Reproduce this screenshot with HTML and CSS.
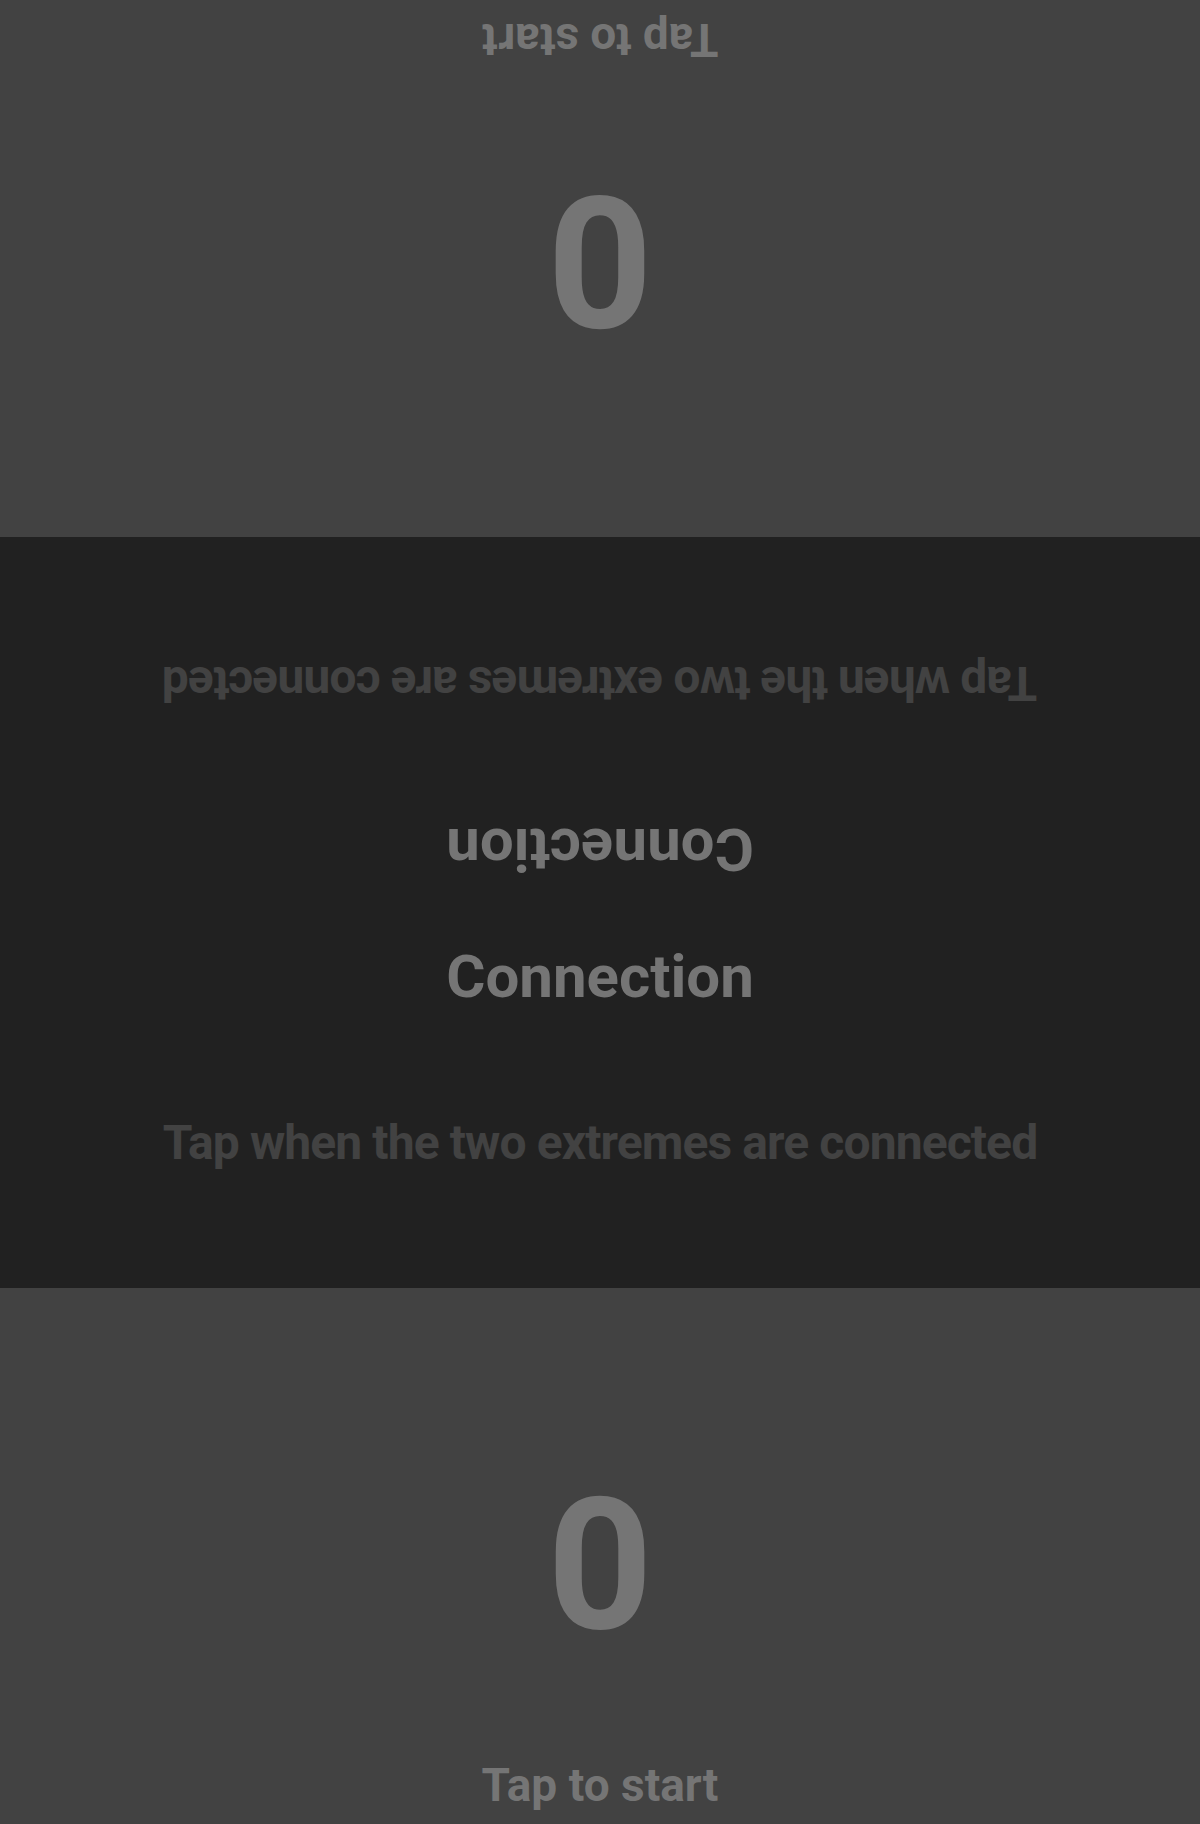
FILE: index.html
```html
<!DOCTYPE html>
<html lang="en">
<head>
<meta charset="utf-8">
<title>Connection</title>
<link rel="stylesheet" href="styles.css">
</head>
<body>
<div class="app">
  <section class="player player-top">
    <div class="score">0</div>
    <div class="start">Tap to start</div>
  </section>
  <section class="board">
    <div class="half half-flip">
      <div class="title">Connection</div>
      <div class="hint">Tap when the two extremes are connected</div>
    </div>
    <div class="half">
      <div class="title">Connection</div>
      <div class="hint">Tap when the two extremes are connected</div>
    </div>
  </section>
  <section class="player">
    <div class="score">0</div>
    <div class="start">Tap to start</div>
  </section>
</div>
</body>
</html>
```
FILE: styles.css
```css
html, body {
  margin: 0;
  padding: 0;
}
body {
  font-family: Roboto, "Liberation Sans", sans-serif;
  font-weight: 700;
  color: #757575;
  background: #212121;
}
.app {
  display: flex;
  flex-direction: column;
  height: 1824px;
  overflow: hidden;
}
.player {
  height: 536px;
  flex: none;
  background: #424242;
  display: flex;
  flex-direction: column;
  align-items: center;
}
.player-top {
  height: 537px;
  transform: rotate(180deg);
}
.score {
  font-size: 184px;
  line-height: 1;
  margin-top: 185px;
}
.start {
  font-size: 46px;
  line-height: 1;
  margin-top: 105px;
  white-space: nowrap;
}
.board {
  flex: 1;
  display: flex;
  flex-direction: column;
  background: #212121;
}
.half {
  flex: 1;
  display: flex;
  flex-direction: column;
  align-items: center;
}
.half-flip {
  transform: rotate(180deg);
}
.title {
  font-size: 60px;
  line-height: 1;
  margin-top: 34px;
  white-space: nowrap;
}
.hint {
  font-size: 48px;
  line-height: 1;
  margin-top: 112px;
  color: #424242;
  white-space: nowrap;
  letter-spacing: -0.9px;
}
```
